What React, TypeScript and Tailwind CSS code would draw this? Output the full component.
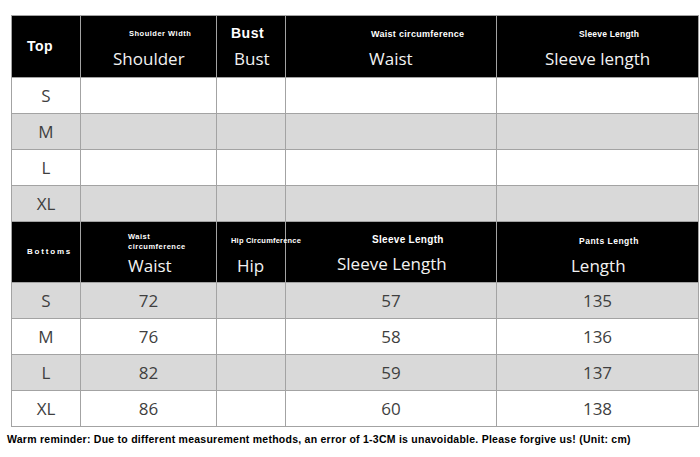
const cols = 'grid grid-cols-[69px_136px_69px_211px_202px]'
const cell = 'border-r border-b border-[#a3a3a3]'
const big = "text-[17px] leading-[22px] text-[#f2f2f2] whitespace-nowrap"
const small = "font-['Liberation_Sans',sans-serif] font-bold text-white whitespace-nowrap leading-[10px]"

function DataRow({ size, vals, gray }: { size: string; vals: string[]; gray: boolean }) {
  const bg = gray ? 'bg-[#d9d9d9]' : 'bg-white'
  return (
    <div className={`${cols} h-[36px] text-[17px] text-[#3f3f3f]`}>
      <div className={`${cell} ${bg} flex items-center justify-center`}>{size}</div>
      {vals.map((v, i) => (
        <div key={i} className={`${cell} ${bg} flex items-center justify-center`}>
          {v}
        </div>
      ))}
    </div>
  )
}

export default function App() {
  return (
    <div className="w-[700px] h-[457px] bg-white font-['Open_Sans',sans-serif] pt-[15px]">
      <div className="ml-[11px] w-[688px] border-l border-t border-[#a3a3a3]">
        {/* Top header */}
        <div className={`${cols} h-[62px] bg-black`}>
          <div className={`${cell} flex items-center pl-[15px]`}>
            <span className="font-['Liberation_Sans',sans-serif] font-bold text-[14px] text-white tracking-[0.5px]">Top</span>
          </div>
          <div className={`${cell} flex flex-col pt-[13px]`}>
            <span className={`${small} text-[7.5px] tracking-[0.5px] pl-[48px]`}>Shoulder Width</span>
            <span className={`${big} mt-[9px] pl-[32px]`}>Shoulder</span>
          </div>
          <div className={`${cell} flex flex-col pt-[8px]`}>
            <span className="font-['Liberation_Sans',sans-serif] font-bold text-[14px] leading-[18px] text-white pl-[14px] tracking-[0.5px]">Bust</span>
            <span className={`${big} mt-[6px] pl-[17px]`}>Bust</span>
          </div>
          <div className={`${cell} flex flex-col pt-[13px]`}>
            <span className={`${small} text-[9px] tracking-[0.3px] pl-[85px]`}>Waist circumference</span>
            <span className={`${big} mt-[9px] pl-[83px]`}>Waist</span>
          </div>
          <div className={`${cell} flex flex-col pt-[13px]`}>
            <span className={`${small} text-[8.5px] tracking-[0.2px] pl-[82px]`}>Sleeve Length</span>
            <span className={`${big} mt-[9px] pl-[48px]`}>Sleeve length</span>
          </div>
        </div>

        <DataRow size="S" vals={['', '', '', '']} gray={false} />
        <DataRow size="M" vals={['', '', '', '']} gray={true} />
        <DataRow size="L" vals={['', '', '', '']} gray={false} />
        <DataRow size="XL" vals={['', '', '', '']} gray={true} />

        {/* Bottoms header */}
        <div className={`${cols} h-[61px] bg-black`}>
          <div className={`${cell} flex items-center pl-[15px]`}>
            <span className={`${small} text-[8px] tracking-[1.8px]`}>Bottoms</span>
          </div>
          <div className={`${cell} flex flex-col pt-[10px] pl-[47px]`}>
            <span className={`${small} text-[7.5px] tracking-[0.5px] leading-[9px]`}>Waist</span>
            <span className={`${small} text-[7.5px] tracking-[0.5px] leading-[9px]`}>circumference</span>
            <span className={`${big} mt-[3px]`}>Waist</span>
          </div>
          <div className={`${cell} flex flex-col pt-[14px]`}>
            <span className={`${small} text-[7.5px] tracking-[0.2px] pl-[14px]`}>Hip Circumference</span>
            <span className={`${big} mt-[9px] pl-[20px]`}>Hip</span>
          </div>
          <div className={`${cell} flex flex-col pt-[12px]`}>
            <span className={`${small} text-[10px] leading-[12px] tracking-[0.3px] pl-[86px]`}>Sleeve Length</span>
            <span className={`${big} mt-[7px] pl-[51px]`}>Sleeve Length</span>
          </div>
          <div className={`${cell} flex flex-col pt-[14px]`}>
            <span className={`${small} text-[8.5px] tracking-[0.5px] pl-[82px]`}>Pants Length</span>
            <span className={`${big} mt-[9px] pl-[74px]`}>Length</span>
          </div>
        </div>

        <DataRow size="S" vals={['72', '', '57', '135']} gray={true} />
        <DataRow size="M" vals={['76', '', '58', '136']} gray={false} />
        <DataRow size="L" vals={['82', '', '59', '137']} gray={true} />
        <DataRow size="XL" vals={['86', '', '60', '138']} gray={false} />
      </div>

      <p className="mt-[5px] ml-[7px] font-['Liberation_Sans',sans-serif] font-bold text-[10.5px] leading-[14px] tracking-[0.25px] text-black whitespace-nowrap">
        Warm reminder: Due to different measurement methods, an error of 1-3CM is unavoidable. Please forgive us! (Unit: cm)
      </p>
    </div>
  )
}
